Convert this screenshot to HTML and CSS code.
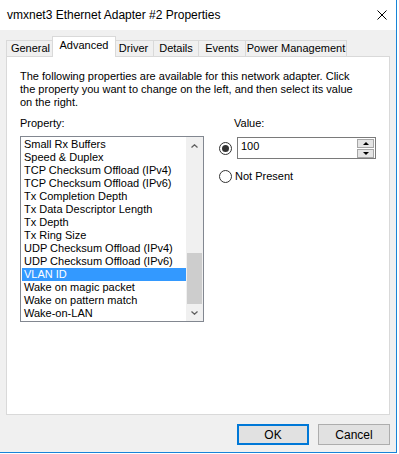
FILE: index.html
```html
<!DOCTYPE html>
<html lang="en">
<head>
    <meta charset="UTF-8">
    <title>vmxnet3 Ethernet Adapter #2 Properties</title>
    <link rel="stylesheet" href="styles.css">
</head>
<body>
    <div class="window">
        <!-- Title bar -->
        <div class="titlebar">
            <span class="title">vmxnet3 Ethernet Adapter #2 Properties</span>
            <svg class="close" viewBox="0 0 10 10" xmlns="http://www.w3.org/2000/svg">
                <path d="M0.5 0.5L9.5 9.5M9.5 0.5L0.5 9.5" stroke="#000" stroke-width="1" />
            </svg>
        </div>

        <div class="dialog">
            <!-- Tabs -->
            <div class="tabs">
                <div class="tab tab-general">General</div>
                <div class="tab tab-advanced active">Advanced</div>
                <div class="tab tab-driver">Driver</div>
                <div class="tab tab-details">Details</div>
                <div class="tab tab-events">Events</div>
                <div class="tab tab-power">Power Management</div>
            </div>

            <div class="panel">
                <p class="intro">The following properties are available for this network adapter. Click<br>the property you want to change on the left, and then select its value<br>on the right.</p>

                <div class="columns">
                    <div class="property-col">
                        <div class="field-label">Property:</div>
                        <div class="listbox">
                            <ul class="list-items">
                                <li>Small Rx Buffers</li>
                                <li>Speed &amp; Duplex</li>
                                <li>TCP Checksum Offload (IPv4)</li>
                                <li>TCP Checksum Offload (IPv6)</li>
                                <li>Tx Completion Depth</li>
                                <li>Tx Data Descriptor Length</li>
                                <li>Tx Depth</li>
                                <li>Tx Ring Size</li>
                                <li>UDP Checksum Offload (IPv4)</li>
                                <li>UDP Checksum Offload (IPv6)</li>
                                <li class="selected">VLAN ID</li>
                                <li>Wake on magic packet</li>
                                <li>Wake on pattern match</li>
                                <li>Wake-on-LAN</li>
                            </ul>
                            <div class="scrollbar">
                                <div class="scroll-btn">
                                    <svg viewBox="0 0 7 4" xmlns="http://www.w3.org/2000/svg"><path d="M0.5 3.5L3.5 0.8L6.5 3.5" fill="none" stroke="#606060" stroke-width="1.3" /></svg>
                                </div>
                                <div class="scroll-track">
                                    <div class="scroll-thumb"></div>
                                </div>
                                <div class="scroll-btn">
                                    <svg viewBox="0 0 7 4" xmlns="http://www.w3.org/2000/svg"><path d="M0.5 0.5L3.5 3.2L6.5 0.5" fill="none" stroke="#606060" stroke-width="1.3" /></svg>
                                </div>
                            </div>
                        </div>
                    </div>

                    <div class="value-col">
                        <div class="field-label value-label">Value:</div>
                        <div class="value-row">
                            <span class="radio checked"></span>
                            <div class="spin-input">
                                <span class="spin-value">100</span>
                                <div class="spin-buttons">
                                    <div class="spin-btn"><span class="arrow-up"></span></div>
                                    <div class="spin-btn"><span class="arrow-down"></span></div>
                                </div>
                            </div>
                        </div>
                        <div class="value-row not-present">
                            <span class="radio"></span>
                            <span>Not Present</span>
                        </div>
                    </div>
                </div>
            </div>

            <!-- Dialog buttons -->
            <div class="buttons">
                <button class="btn btn-default">OK</button>
                <button class="btn">Cancel</button>
            </div>
        </div>
    </div>
</body>
</html>
```

FILE: styles.css
```css
* {
    margin: 0;
    padding: 0;
    box-sizing: border-box;
}

body {
    background-color: #fff;
    color: #000;
    font-family: "Liberation Sans", Arial, sans-serif;
    font-size: 11px;
    line-height: 13px;
}

.window {
    width: 397px;
    height: 453px;
    background-color: #f0f0f0;
    border-right: 1px solid #1883d7;
    border-bottom: 1px solid #1883d7;
    display: flex;
    flex-direction: column;
}

/* Title bar */
.titlebar {
    height: 30px;
    background-color: #fff;
    display: flex;
    align-items: center;
    justify-content: space-between;
    padding: 0 9px 0 7px;
}

.title {
    font-size: 12px;
}

.close {
    width: 10px;
    height: 10px;
}

.dialog {
    flex: 1;
    display: flex;
    flex-direction: column;
    padding: 6px 6px 0 6px;
}

/* Tabs */
.tabs {
    display: flex;
    align-items: flex-end;
    height: 20px;
}

.tab {
    height: 16px;
    line-height: 15px;
    text-align: center;
    white-space: nowrap;
    background-color: #f0f0f0;
    border: 1px solid #d9d9d9;
    border-bottom: none;
    margin-left: -1px;
}

.tab-general { width: 49px; margin-left: 0; }
.tab-advanced { width: 64px; }
.tab-driver { width: 41px; }
.tab-details { width: 46px; }
.tab-events { width: 48px; }
.tab-power { width: 102px; }

.tab.active {
    height: 21px;
    line-height: 17px;
    background-color: #fff;
    margin: 0 -2px -1px -3px;
    position: relative;
    z-index: 1;
}

.panel {
    height: 359px;
    background-color: #fff;
    border: 1px solid #d9d9d9;
    padding: 13px 13px 0 13px;
}

.intro {
    margin-bottom: 8px;
}

.columns {
    display: flex;
}

.property-col {
    width: 186px;
}

.listbox {
    margin-top: 6px;
    height: 186px;
    border: 1px solid #828790;
    display: flex;
    overflow: hidden;
}

.list-items {
    list-style: none;
    flex: 1;
    padding: 1px 0 0 1px;
}

.list-items li {
    height: 13px;
    padding-left: 2px;
    white-space: nowrap;
}

.list-items li.selected {
    background-color: #3399ff;
    color: #fff;
}

.scrollbar {
    width: 17px;
    background-color: #f0f0f0;
    display: flex;
    flex-direction: column;
}

.scroll-btn {
    height: 17px;
    display: flex;
    align-items: center;
    justify-content: center;
}

.scroll-btn svg {
    width: 7px;
    height: 4px;
}

.scroll-track {
    flex: 1;
    display: flex;
    flex-direction: column;
    justify-content: flex-end;
    padding: 0 1px;
}

.scroll-thumb {
    height: 51px;
    background-color: #cdcdcd;
}

/* Value side */
.value-col {
    margin-left: 15px;
}

.value-label {
    padding-left: 15px;
}

.value-row {
    display: flex;
    align-items: center;
    margin-top: 7px;
}

.radio {
    width: 13px;
    height: 13px;
    border: 1px solid #333;
    border-radius: 50%;
    background-color: #fff;
    display: flex;
    align-items: center;
    justify-content: center;
    margin-right: 5px;
}

.radio.checked::after {
    content: "";
    width: 7px;
    height: 7px;
    border-radius: 50%;
    background-color: #333;
}

.value-row.not-present {
    margin-top: 11px;
}

.value-row.not-present .radio {
    margin-right: 3px;
}

.spin-input {
    width: 139px;
    height: 22px;
    border: 1px solid #7a7a7a;
    background-color: #fff;
    display: flex;
    padding: 0 1px 0 3px;
}

.spin-value {
    flex: 1;
    padding-top: 2px;
}

.spin-buttons {
    width: 17px;
    display: flex;
    flex-direction: column;
    gap: 1px;
    padding-top: 1px;
}

.spin-btn {
    height: 9px;
    background-color: #e5e5e5;
    border: 1px solid #a6a6a6;
    display: flex;
    align-items: center;
    justify-content: center;
}

.arrow-up {
    width: 0;
    height: 0;
    border-left: 3px solid transparent;
    border-right: 3px solid transparent;
    border-bottom: 3px solid #000;
}

.arrow-down {
    width: 0;
    height: 0;
    border-left: 3px solid transparent;
    border-right: 3px solid transparent;
    border-top: 3px solid #000;
}

/* Buttons */
.buttons {
    display: flex;
    justify-content: flex-end;
    gap: 9px;
    margin-top: 9px;
}

.btn {
    width: 72px;
    height: 21px;
    background-color: #e1e1e1;
    border: 1px solid #adadad;
    font-family: "Liberation Sans", Arial, sans-serif;
    font-size: 12px;
    color: #000;
}

.btn-default {
    border: 2px solid #0078d7;
}
```
